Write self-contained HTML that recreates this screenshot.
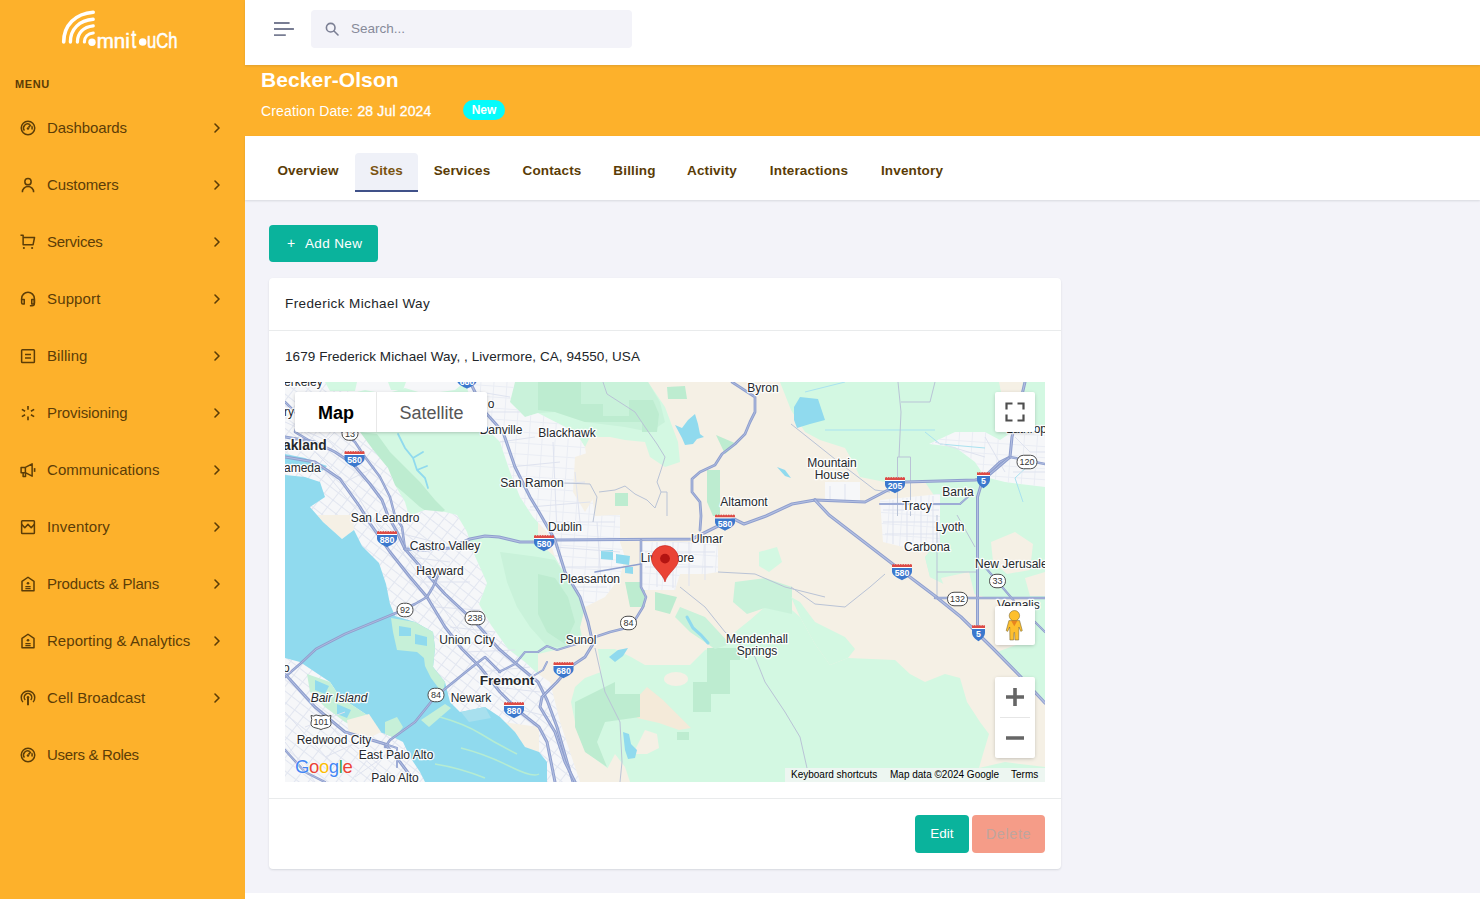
<!DOCTYPE html>
<html lang="en">
<head>
<meta charset="utf-8">
<title>Becker-Olson - Sites</title>
<style>
*{box-sizing:border-box;margin:0;padding:0}
html,body{width:1480px;height:899px;overflow:hidden}
body{background:#f3f3f9;font-family:"Liberation Sans",sans-serif;color:#212529;position:relative}
.abs{position:absolute}
/* sidebar */
#sidebar{position:absolute;left:0;top:0;width:245px;height:899px;background:#fdb12b}
#sidebar .menu-title{position:absolute;left:15px;top:78px;font-size:11px;font-weight:700;letter-spacing:.6px;color:#5a3c06}
.nav-item{position:absolute;left:0;width:245px;height:24px;color:#5c3d07;font-size:15px;line-height:24px}
.nav-item .lbl{position:absolute;left:47px;top:0;white-space:nowrap}
.nav-item svg.ic{position:absolute;left:19px;top:3px;width:18px;height:18px}
.nav-item svg.chev{position:absolute;left:212px;top:6px;width:10px;height:12px}
/* topbar */
#topbar{position:absolute;left:245px;top:0;width:1235px;height:65px;background:#fff;z-index:3;box-shadow:0 1px 2px rgba(56,65,74,.15)}
#search{position:absolute;left:66px;top:10px;width:321px;height:38px;background:#f3f3f9;border-radius:4px}
#search span{position:absolute;left:40px;top:10px;font-size:13.5px;color:#878a99;line-height:17px}
/* page header */
#band{position:absolute;left:245px;top:65px;width:1235px;height:71px;background:#fdb12b}
#band h1{position:absolute;left:16px;top:3px;font-size:21px;letter-spacing:.1px;font-weight:700;color:#fff;line-height:24px;white-space:nowrap}
#band .sub{position:absolute;left:16px;top:38px;font-size:14px;letter-spacing:.15px;color:#fff;line-height:17px;white-space:nowrap}
#band .badge{position:absolute;left:218px;top:35px;width:42px;height:20px;border-radius:10px;background:#05fbfb;color:#fff;font-size:12px;font-weight:700;text-align:center;line-height:21px}
/* tabs */
#tabs{position:absolute;left:245px;top:136px;width:1235px;height:64px;background:#fff;box-shadow:0 1px 2px rgba(56,65,74,.15)}
#tabs .tab{position:absolute;top:17px;height:39px;line-height:35px;letter-spacing:.15px;font-size:13.5px;font-weight:700;color:#5a3c06;white-space:nowrap;text-align:center}
#tabs .tab.active{background:#eff1f8;border-bottom:2px solid #405189;border-radius:4px 4px 0 0;color:#7a5410}
/* content */
#addnew{position:absolute;left:269px;top:225px;width:109px;height:37px;background:#0ab39c;border-radius:4px;color:#fff;font-size:13.5px;line-height:37px}
#addnew .plus{position:absolute;left:18px;top:0;font-size:14px}
#addnew .t{position:absolute;left:36px;top:0;white-space:nowrap;letter-spacing:.35px}
#card{position:absolute;left:269px;top:278px;width:792px;height:591px;background:#fff;border-radius:4px;box-shadow:0 1px 2px rgba(56,65,74,.15)}
#card .hd{position:absolute;left:0;top:0;width:792px;height:53px;border-bottom:1px solid #e9ebec}
#card .hd span{position:absolute;left:16px;top:17px;letter-spacing:.4px;font-size:13.5px;line-height:17px;color:#212529;white-space:nowrap}
#card .addr{position:absolute;left:16px;top:70px;letter-spacing:.07px;font-size:13.5px;line-height:17px;color:#212529;white-space:nowrap}
#card .ft{position:absolute;left:0;top:520px;width:792px;height:70px;border-top:1px solid #e9ebec}
.btn{position:absolute;top:16px;height:38px;border-radius:4px;color:#fff;font-size:13.5px;line-height:38px;text-align:center}
#edit{left:646px;width:54px;background:#0ab39c}
#delete{left:703px;width:73px;background:#f59c88;color:#bfa59e;font-size:14.500px;letter-spacing:.6px}
#map{position:absolute;left:16px;top:104px;width:760px;height:400px;overflow:hidden;background:#f5f0e4}

.gm-type{position:absolute;left:10px;top:10px;width:192px;height:40px;background:#fff;border-radius:2px;box-shadow:0 1px 4px -1px rgba(0,0,0,.3);font-size:18px;line-height:42px}
.gm-type .gm-m{position:absolute;left:1px;top:0;width:81px;text-align:center;font-weight:700;color:#000;border-right:1px solid #e8e8e8;height:40px}
.gm-type .gm-s{position:absolute;left:81px;top:0;width:111px;text-align:center;color:#565656}
.gm-box{position:absolute;width:40px;background:#fff;border-radius:2px;box-shadow:0 1px 4px -1px rgba(0,0,0,.3)}
.gm-box svg{display:block}
.gm-attr{position:absolute;left:500px;top:386px;width:260px;height:14px;background:rgba(245,245,245,.75);font-size:10px;line-height:14px;color:#000}
.gm-attr span{position:absolute;top:0;white-space:nowrap}
.gm-logo{position:absolute;left:10px;top:374px;font-size:18.500px;line-height:22px;letter-spacing:-.4px;white-space:nowrap;text-shadow:0 0 1px #fff,0 0 2px #fff}
#footer{position:absolute;left:245px;top:893px;width:1235px;height:6px;background:#fff}
</style>
</head>
<body>
<div id="sidebar">
  <svg id="logo" class="abs" style="left:50px;top:0;width:150px;height:60px" viewBox="0 0 150 60">
    <g fill="none" stroke="#fff" stroke-linecap="round">
      <path d="M13.700 42C13.700 25 25.500 13.500 43.200 12.200" stroke-width="3.600"/>
      <path d="M20.400 42C20.400 29 29.500 20.300 43.200 19.300" stroke-width="3.400"/>
      <path d="M27.400 42C27.400 33 33.500 26.800 43.200 25.800" stroke-width="3.300"/>
      <path d="M34.400 42C34.400 37 38 33.500 43.200 33" stroke-width="3.200"/>
    </g>
    <circle cx="42" cy="42.300" r="3.700" fill="#fff"/>
    <circle cx="92.700" cy="42" r="3.800" fill="#fff"/>
    <g font-family="'Liberation Sans',sans-serif" fill="#fff" stroke="#fff" stroke-width=".55" stroke-linejoin="round">
      <text x="46.700" y="47.600" font-size="21" textLength="33" lengthAdjust="spacingAndGlyphs">mni</text>
      <text x="81.200" y="47.900" font-size="25" textLength="5" lengthAdjust="spacingAndGlyphs">t</text>
      <text x="97" y="47.600" font-size="21.500" textLength="30.500" lengthAdjust="spacingAndGlyphs">uCh</text>
    </g>
  </svg>
  <div class="menu-title">MENU</div>
  <div class="nav-item" style="top:116px"><svg class="ic" viewBox="0 0 24 24" fill="none" stroke="currentColor" stroke-width="2" stroke-linejoin="round"><circle cx="12" cy="12" r="9"/><path d="M7.200 15.500a5.500 5.500 0 0 1 7.300-8M17 9.600a5.500 5.500 0 0 1 .2 4.400"/><path d="M12.8 11.2l3-3.6" stroke-width="2.2"/><circle cx="12" cy="12.6" r="1.7" fill="currentColor" stroke="none"/></svg><span class="lbl" id="n0" style="letter-spacing:-0.09px">Dashboards</span><svg class="chev" viewBox="0 0 10 12"><path d="M3 2l4 4-4 4" fill="none" stroke="currentColor" stroke-width="1.600" stroke-linecap="round" stroke-linejoin="round"/></svg></div>
  <div class="nav-item" style="top:173px"><svg class="ic" viewBox="0 0 24 24" fill="none" stroke="currentColor" stroke-width="2" stroke-linejoin="round"><circle cx="12" cy="7.5" r="4.2"/><path d="M4.5 21.5a7.5 7.5 0 0 1 15 0"/></svg><span class="lbl" id="n1" style="letter-spacing:-0.11px">Customers</span><svg class="chev" viewBox="0 0 10 12"><path d="M3 2l4 4-4 4" fill="none" stroke="currentColor" stroke-width="1.600" stroke-linecap="round" stroke-linejoin="round"/></svg></div>
  <div class="nav-item" style="top:230px"><svg class="ic" viewBox="0 0 24 24" fill="none" stroke="currentColor" stroke-width="2" stroke-linejoin="round"><path d="M2 3h3.500v12.500h13.300l1.900-9.500H5.500"/><circle cx="6.5" cy="20" r="1.4" fill="currentColor" stroke="none"/><circle cx="17.5" cy="20" r="1.4" fill="currentColor" stroke="none"/></svg><span class="lbl" id="n2" style="letter-spacing:-0.25px">Services</span><svg class="chev" viewBox="0 0 10 12"><path d="M3 2l4 4-4 4" fill="none" stroke="currentColor" stroke-width="1.600" stroke-linecap="round" stroke-linejoin="round"/></svg></div>
  <div class="nav-item" style="top:287px"><svg class="ic" viewBox="0 0 24 24" fill="none" stroke="currentColor" stroke-width="2" stroke-linejoin="round"><path d="M3.5 13v-1.5a8.5 8.5 0 0 1 17 0V18a3 3 0 0 1-3 3h-3"/><path d="M3.5 12.5h3.5v6H5a1.5 1.5 0 0 1-1.5-1.5zM20.5 12.5H17v6h2a1.5 1.5 0 0 0 1.500-1.5z"/></svg><span class="lbl" id="n3" style="letter-spacing:0.14px">Support</span><svg class="chev" viewBox="0 0 10 12"><path d="M3 2l4 4-4 4" fill="none" stroke="currentColor" stroke-width="1.600" stroke-linecap="round" stroke-linejoin="round"/></svg></div>
  <div class="nav-item" style="top:344px"><svg class="ic" viewBox="0 0 24 24" fill="none" stroke="currentColor" stroke-width="2" stroke-linejoin="round"><rect x="3.5" y="3.500" width="17" height="17" rx="1"/><path d="M8 10h8M8 14.500h8"/></svg><span class="lbl" id="n4" style="letter-spacing:0.07px">Billing</span><svg class="chev" viewBox="0 0 10 12"><path d="M3 2l4 4-4 4" fill="none" stroke="currentColor" stroke-width="1.600" stroke-linecap="round" stroke-linejoin="round"/></svg></div>
  <div class="nav-item" style="top:401px"><svg class="ic" viewBox="0 0 24 24" fill="none" stroke="currentColor" stroke-width="2" stroke-linejoin="round"><path d="M12 2.500v5M12 16.5v5M3.800 7.200l4.300 2.500M15.900 14.300l4.300 2.500M3.800 16.800l4.300-2.500M15.900 9.700l4.300-2.500" stroke-width="2.200"/></svg><span class="lbl" id="n5" style="letter-spacing:-0.1px">Provisioning</span><svg class="chev" viewBox="0 0 10 12"><path d="M3 2l4 4-4 4" fill="none" stroke="currentColor" stroke-width="1.600" stroke-linecap="round" stroke-linejoin="round"/></svg></div>
  <div class="nav-item" style="top:458px"><svg class="ic" viewBox="0 0 24 24" fill="none" stroke="currentColor" stroke-width="2" stroke-linejoin="round"><path d="M2.800 8.500h5.700l9-4.700v16.400l-9-4.700H2.800zM8.500 8.500v7M5.500 15.500v5.200h3.200v-5.200"/><path d="M20.800 9.500v5" stroke-width="2.200"/></svg><span class="lbl" id="n6" style="letter-spacing:0.06px">Communications</span><svg class="chev" viewBox="0 0 10 12"><path d="M3 2l4 4-4 4" fill="none" stroke="currentColor" stroke-width="1.600" stroke-linecap="round" stroke-linejoin="round"/></svg></div>
  <div class="nav-item" style="top:515px"><svg class="ic" viewBox="0 0 24 24" fill="none" stroke="currentColor" stroke-width="2" stroke-linejoin="round"><rect x="3.500" y="3.500" width="17" height="17" rx="1"/><path d="M3.500 8.500l4.250 4.500 4.250-4.500 4.250 4.500 4.250-4.500"/></svg><span class="lbl" id="n7" style="letter-spacing:0.14px">Inventory</span><svg class="chev" viewBox="0 0 10 12"><path d="M3 2l4 4-4 4" fill="none" stroke="currentColor" stroke-width="1.600" stroke-linecap="round" stroke-linejoin="round"/></svg></div>
  <div class="nav-item" style="top:572px"><svg class="ic" viewBox="0 0 24 24" fill="none" stroke="currentColor" stroke-width="2" stroke-linejoin="round"><path d="M4 21V8.500l8-5.500 8 5.500V21z"/><circle cx="12" cy="11" r="1.800" fill="currentColor" stroke="none"/><path d="M8.500 15.500h7M8.500 18.300h7" stroke-width="1.700"/></svg><span class="lbl" id="n8" style="letter-spacing:-0.19px">Products &amp; Plans</span><svg class="chev" viewBox="0 0 10 12"><path d="M3 2l4 4-4 4" fill="none" stroke="currentColor" stroke-width="1.600" stroke-linecap="round" stroke-linejoin="round"/></svg></div>
  <div class="nav-item" style="top:629px"><svg class="ic" viewBox="0 0 24 24" fill="none" stroke="currentColor" stroke-width="2" stroke-linejoin="round"><path d="M4 21V8.500l8-5.500 8 5.500V21z"/><circle cx="12" cy="11" r="1.800" fill="currentColor" stroke="none"/><path d="M8.500 15.500h7M8.500 18.300h7" stroke-width="1.700"/></svg><span class="lbl" id="n9" style="letter-spacing:0.04px">Reporting &amp; Analytics</span><svg class="chev" viewBox="0 0 10 12"><path d="M3 2l4 4-4 4" fill="none" stroke="currentColor" stroke-width="1.600" stroke-linecap="round" stroke-linejoin="round"/></svg></div>
  <div class="nav-item" style="top:686px"><svg class="ic" viewBox="0 0 24 24" fill="none" stroke="currentColor" stroke-width="2" stroke-linejoin="round"><path d="M5.200 17.500a9 9 0 1 1 13.600 0"/><path d="M8.400 14.500a5 5 0 1 1 7.200 0"/><path d="M12 11v10.500" stroke-width="2.600"/><circle cx="12" cy="11" r="1.600" fill="currentColor" stroke="none"/></svg><span class="lbl" id="n10" style="letter-spacing:0.05px">Cell Broadcast</span><svg class="chev" viewBox="0 0 10 12"><path d="M3 2l4 4-4 4" fill="none" stroke="currentColor" stroke-width="1.600" stroke-linecap="round" stroke-linejoin="round"/></svg></div>
  <div class="nav-item" style="top:743px"><svg class="ic" viewBox="0 0 24 24" fill="none" stroke="currentColor" stroke-width="2" stroke-linejoin="round"><circle cx="12" cy="12" r="9"/><path d="M7.200 15.500a5.500 5.500 0 0 1 7.300-8M17 9.600a5.500 5.500 0 0 1 .2 4.400"/><path d="M12.8 11.2l3-3.6" stroke-width="2.2"/><circle cx="12" cy="12.6" r="1.7" fill="currentColor" stroke="none"/></svg><span class="lbl" id="n11" style="letter-spacing:-0.32px">Users &amp; Roles</span></div>
</div>
<div id="topbar">
  <svg class="abs" style="left:28px;top:20px;width:22px;height:18px" viewBox="0 0 22 18" fill="none" stroke="#787d93" stroke-width="1.800" stroke-linecap="butt"><path d="M1 3h15.600M1 9h19.900M1 15.200h11.800"/></svg>
  <div id="search"><svg class="abs" style="left:13px;top:11px;width:16px;height:16px" viewBox="0 0 16 16" fill="none" stroke="#7b7f94" stroke-width="1.600" stroke-linecap="round"><circle cx="6.700" cy="6.700" r="4.300"/><path d="M10 10l4 4"/></svg><span>Search...</span></div>
</div>
<div id="band">
  <h1>Becker-Olson</h1>
  <div class="sub">Creation Date: <b style="font-weight:400;-webkit-text-stroke:.3px #fff">28 Jul 2024</b></div>
  <div class="badge">New</div>
</div>
<div id="tabs">
  <div class="tab" style="left:16px;width:94px">Overview</div>
  <div class="tab active" style="left:110px;width:63px">Sites</div>
  <div class="tab" style="left:173px;width:88px">Services</div>
  <div class="tab" style="left:261px;width:92px">Contacts</div>
  <div class="tab" style="left:353px;width:73px">Billing</div>
  <div class="tab" style="left:426px;width:82px">Activity</div>
  <div class="tab" style="left:508px;width:112px">Interactions</div>
  <div class="tab" style="left:620px;width:94px">Inventory</div>
</div>
<div id="addnew"><span class="plus">+</span><span class="t">Add New</span></div>
<div id="card">
  <div class="hd"><span>Frederick Michael Way</span></div>
  <div class="addr">1679 Frederick Michael Way, , Livermore, CA, 94550, USA</div>
  <div id="map">
<!--MAP-->
<svg class="abs" style="left:0;top:0" width="760" height="400" viewBox="0 0 760 400">
<rect width="760" height="400" fill="#d3f8e2"/>
<path d="M363 0 L495 0 L506 28 L520 50 L535 58 L560 66 L568 80 L575 95 L600 100 L640 100 L648 112 L655 125 L650 135 L652 160 L640 175 L645 195 L665 205 L700 215 L760 215 L760 385 L720 380 L694 386 L698 372 L704 352 L695 340 L682 320 L675 296 L660 292 L640 300 L625 292 L610 278 L563 276 L545 283 L530 262 L515 235 L500 222 L480 225 L465 238 L450 250 L438 262 L420 268 L405 283 L360 283 L346 275 L330 267 L300 267 L295 245 L300 225 L285 200 L270 175 L253 160 L253 60 L290 50 L300 65 L305 55 L325 55 L340 58 L360 60 L365 75 L380 85 L395 80 L393 60 L380 25Z" fill="#f5f0e5" />
<path d="M253 272 L270 268 L290 263 L312 260 L316 290 L300 296 L290 305 L286 320 L291 345 L301 370 L321 385 L340 400 L290 400 L280 370 L270 340 L262 300 L253 292Z" fill="#f5f0e5" />
<path d="M346 322 L362 305 L378 318 L392 332 L406 346 L394 348 L374 341 L352 336Z" fill="#f4ead9" />
<ellipse cx="391" cy="297" rx="12" ry="7" fill="#f5f0e5"/>
<path d="M348 372 L360 348 L372 352 L374 366 L362 372Z" fill="#f5f0e5" />
<path d="M318 395 L330 372 L340 385 L345 400 L320 400Z" fill="#f5f0e5" />
<path d="M652 133 L760 133 L760 215 L700 215 L665 205 L645 195 L640 175 L652 160Z" fill="#d3f8e2" />
<path d="M706 160 L730 150 L748 162 L745 188 L722 192 L708 180Z" fill="#f5f0e5" />
<path d="M656 196 L684 190 L690 214 L662 212Z" fill="#f5f0e5" />
<path d="M740 196 L760 190 L760 214 L745 214Z" fill="#f5f0e5" />
<path d="M745 215 L760 215 L760 321 L735 294 L712 270 L745 258Z" fill="#d3f8e2" />
<path d="M714 0 L738 0 L733 30 L720 30Z" fill="#f5f0e5" />
<path d="M450 200 L480 196 L507 205 L507 232 L480 226 L462 232 L448 220Z" fill="#c9f2da" />
<path d="M474 170 L492 165 L497 180 L484 190 L474 184Z" fill="#d3f8e2" />
<path d="M506 215 L515 220 L530 240 L560 255 L570 267 L563 276 L545 283 L530 262 L515 235Z" fill="#d3f8e2" />
<path d="M74 50 L92 52 L105 70 L120 85 L135 100 L150 118 L160 128 L150 135 L135 125 L118 110 L100 95 L88 75Z" fill="#bdecd0" />
<path d="M215 0 L363 0 L375 20 L380 40 L365 50 L340 45 L300 40 L270 30 L253 31 L240 35 L225 20Z" fill="#c9f2da" />
<path d="M253 0 L296 0 L296 22 L318 22 L318 34 L344 34 L344 18 L368 18 L374 32 L372 50 L357 50 L357 40 L300 40 L270 30 L253 28Z" fill="#bdecd0" />
<path d="M215 170 L253 175 L270 178 L285 200 L300 225 L295 245 L296 260 L280 266 L262 264 L245 245 L232 225 L222 200Z" fill="#c9f2da" />
<path d="M253 192 L270 196 L283 215 L290 240 L280 262 L262 250 L253 232Z" fill="#bdecd0" />
<path d="M290 320 L330 300 L330 312 L355 312 L355 335 L320 340 L312 360 L322 385 L300 370 L290 345Z" fill="#bdecd0" />
<path d="M422 266 L455 266 L455 278 L445 278 L445 312 L426 312 L426 330 L408 330 L408 300 L422 300Z" fill="#bdecd0" />
<path d="M422 88 L435 88 L435 134 L428 134 L422 120Z" fill="#bdecd0" />
<path d="M431 53 L452 62 L440 72Z" fill="#bdecd0" />
<path d="M382 5 L400 4 L402 17 L383 17Z" fill="#bdecd0" />
<path d="M330 111 L343 111 L343 124 L330 124Z" fill="#bdecd0" />
<path d="M340 200 L360 200 L360 225 L345 225Z" fill="#bdecd0" />
<path d="M370 210 L392 215 L385 232 L370 228Z" fill="#bdecd0" />
<path d="M395 225 L420 235 L445 262 L430 267 L405 250 L390 235Z" fill="#c9f2da" />
<path d="M392 350 L404 350 L404 358 L392 358Z" fill="#bdecd0" />
<path d="M0 0 L60 0 L75 50 L89 69 L103 86 L110 103 L120 120 L124 134 L140 128 L160 130 L172 133 L182 150 L189 172 L202 201 L194 222 L206 243 L223 267 L240 280 L253 292 L265 300 L275 340 L285 370 L295 400 L0 400Z" fill="#f6f7f9" />
<path d="M60 0 L180 0 L170 8 L140 12 L120 6 L100 12 L80 8 L64 12Z" fill="#f6f7f9" />
<path d="M180 0 L230 0 L225 20 L240 35 L253 31 L290 50 L300 65 L305 100 L310 134 L335 133 L335 160 L340 175 L335 195 L320 215 L300 225 L285 200 L270 175 L262 150 L248 135 L235 115 L225 90 L215 60 L195 40 L185 15Z" fill="#f6f7f9" />
<path d="M357 160 L433 160 L433 190 L421 192 L395 192 L390 208 L357 208Z" fill="#f6f7f9" />
<path d="M595 118 L655 112 L655 165 L630 168 L598 160Z" fill="#f6f7f9" />
<path d="M540 100 L575 100 L575 120 L540 118Z" fill="#f6f7f9" />
<path d="M644 62 L670 50 L700 50 L715 58 L730 48 L760 45 L760 105 L720 100 L700 95 L690 80 L670 65Z" fill="#f6f7f9" />
<defs><pattern id="st1" width="11" height="9" patternUnits="userSpaceOnUse" patternTransform="rotate(38)"><path d="M0 .5H11M.5 0V9" stroke="#e2e6f0" stroke-width="1" fill="none"/></pattern><pattern id="st2" width="13" height="11" patternUnits="userSpaceOnUse" patternTransform="rotate(4)"><path d="M0 .5H13M.5 0V11" stroke="#eaedf4" stroke-width="1" fill="none"/></pattern><clipPath id="cu3"><path d="M0 0 L60 0 L75 50 L89 69 L103 86 L110 103 L120 120 L124 134 L140 128 L160 130 L172 133 L182 150 L189 172 L202 201 L194 222 L206 243 L223 267 L240 280 L253 292 L265 300 L275 340 L285 370 L295 400 L0 400Z"/></clipPath><clipPath id="cu1"><path d="M180 0 L230 0 L225 20 L240 35 L253 31 L290 50 L300 65 L305 100 L310 134 L335 133 L335 160 L340 175 L335 195 L320 215 L300 225 L285 200 L270 175 L262 150 L248 135 L235 115 L225 90 L215 60 L195 40 L185 15Z M357 160 L433 160 L433 190 L421 192 L395 192 L390 208 L357 208Z M595 118 L655 112 L655 165 L630 168 L598 160Z M644 62 L670 50 L700 50 L715 58 L730 48 L760 45 L760 105 L720 100 L700 95 L690 80 L670 65Z"/></clipPath></defs>
<rect width="300" height="400" fill="url(#st1)" clip-path="url(#cu3)"/>
<rect x="170" width="590" height="400" fill="url(#st2)" clip-path="url(#cu1)"/>
<path d="M40 0 L72 0 L70 9 L45 9Z" fill="#d3f8e2" />
<path d="M103 0 L121 0 L118 8 L106 8Z" fill="#d3f8e2" />
<path d="M32 133 L68 133 L69 148 L57 157 L38 140Z" fill="#f5f0e5" />
<path d="M218 340 L254 345 L254 372 L240 365 L230 350Z" fill="#f5f0e5" />
<path d="M290 75 L305 70 L312 110 L300 130 L288 110Z" fill="#f5f0e5" />
<path d="M0 93 L20 95 L35 100 L40 115 L25 125 L32 133 L38 140 L57 157 L69 148 L77 164 L94 181 L101 202 L105 222 L110 234 L130 240 L148 250 L150 266 L148 285 L160 300 L165 320 L175 330 L200 325 L215 335 L230 350 L240 365 L254 370 L262 380 L262 400 L140 400 L135 390 L125 375 L118 360 L108 355 L95 350 L85 335 L70 325 L55 315 L45 300 L30 290 L15 280 L0 276Z" fill="#90daee" />
<path d="M0 72 L20 76 L42 84 L36 90 L18 84 L0 82Z" fill="#90daee"/>
<path d="M106 236 L130 240 L148 250 L150 266 L146 282 L132 270 L112 268 L108 250Z" fill="#c6f0d8" />
<path d="M114 244 L126 246 L126 254 L114 254Z" fill="#90daee" />
<path d="M130 252 L142 255 L142 264 L130 262Z" fill="#90daee" />
<path d="M22 292 L45 300 L55 315 L70 325 L85 335 L95 350 L80 350 L60 340 L40 325 L25 310Z" fill="#c6f0d8" />
<path d="M30 298 L44 304 L40 312 L30 308Z" fill="#90daee" />
<path d="M52 322 L66 328 L62 336 L52 332Z" fill="#90daee" />
<path d="M62 338 L84 332 L96 350 L84 356 L64 352Z" fill="#f5f0e5" />
<path d="M100 340 L112 335 L118 345 L110 356 L100 352Z" fill="#c6f0d8" />
<path d="M138 268 L150 266 L148 285 L160 300 L158 312 L146 296 L140 284Z" fill="#c6f0d8" />
<path d="M136 338 L160 322 L166 326 L144 345Z" fill="#c6f0d8" />
<path d="M155 335 Q180 342 196 352 T232 372 M176 366 Q200 372 224 384 T254 392 M150 382 Q175 386 200 396" fill="none" stroke="#b5ecd2" stroke-width="1.500"/>
<path d="M176 330 L200 325 L206 336 L184 340Z" fill="#a8e0ee" />
<path d="M390 43 L397 46 L403 38 L410 32 L413 42 L415 52 L419 55 L412 57 L408 62 L400 63 L397 56Z" fill="#90daee" />
<path d="M509 25 L515 15 L533 17 L540 38 L525 42 L512 46 L509 38Z" fill="#90daee" />
<path d="M338 350 L344 352 L346 362 L352 368 L350 376 L343 377 L340 368Z" fill="#90daee" />
<path d="M324 275 L333 268 L343 266 L338 274 L330 280Z" fill="#90daee" />
<path d="M402 235 L408 246 L416 253 L423 261" fill="none" stroke="#90daee" stroke-width="3" stroke-linecap="round"/>
<path d="M316 168 L328 168 L328 178 L316 177Z" fill="#90daee" />
<path d="M331 172 L345 174 L344 183 L331 181Z" fill="#90daee" />
<path d="M340 185 L348 185 L348 192 L340 191Z" fill="#90daee" />
<path d="M113 52 L120 66 L128 76 L132 88 L140 96 L143 106 M128 76 L138 70 M132 88 L142 84" fill="none" stroke="#90daee" stroke-width="1.800" stroke-linecap="round"/>
<path d="M492 85 L500 88 L506 96 L500 94Z" fill="#90daee" />
<path d="M540 48 H650 M520 10 L560 0 M640 50 L655 62 L700 66 M745 82 L730 96 L738 120" fill="none" stroke="#a9e2f0" stroke-width="1"/>
<g fill="none" stroke="#dfe3ef" stroke-width="1">
<path d="M10 20 L60 45 M0 40 L45 60 L80 100 M20 60 L70 110 L95 150 M40 90 L90 150 L130 205 M70 120 L110 160 L150 215 L175 250 M95 135 L135 180 L170 225 L200 260 M110 150 L150 160 M125 175 L165 180 M135 200 L185 200 M150 225 L195 228 M165 245 L210 250 M180 270 L230 268 M195 290 L245 285 M210 305 L255 310 M225 325 L265 335 M120 190 L160 240 M100 160 L120 140 M60 100 L90 85 M30 70 L50 50"/>
<path d="M195 10 L225 15 M200 30 L235 30 M215 60 L250 55 M225 85 L275 80 M235 105 L300 100 M245 125 L305 120 M258 140 L330 140 M270 165 L335 170 M280 185 L335 185 M290 205 L322 205 M268 60 L272 150 M290 90 L296 150 M312 140 L316 200"/>
<path d="M360 170 H430 M360 185 H428 M372 160 V205 M388 160 V206 M404 160 V204 M420 160 V198"/>
<path d="M598 128 H654 M598 140 H654 M600 152 H652 M608 118 V162 M622 116 V166 M636 114 V166 M648 114 V164 M545 104 V118 M560 102 V118"/>
<path d="M5 300 L60 360 L100 395 M0 330 L50 385 M20 345 L60 330 M40 375 L85 355 M70 395 L105 370 M0 360 L30 400"/>
<path d="M650 60 L700 75 M700 55 L720 90 M730 55 L745 70 H760 M728 90 H760"/>
</g>
<g fill="none" stroke="#b9c3d6" stroke-width="1">
<path d="M318 0 L322 12 L350 30 L360 45 L372 62 L380 75 L376 88 L372 100 L376 110 H382 V134"/>
<path d="M314 110 L330 108 L340 104 L350 112 L362 118 L370 126 L376 110"/>
<path d="M253 100 L305 102 L312 115 L308 140"/>
<path d="M310 266 L320 310 L335 340 L337 380 L335 400"/>
<path d="M506 42 L560 85 L590 108 L605 110"/>
<path d="M613 0 L616 30 L614 75 H625.500 V134 M616 20 H645 L650 0 M614 75 H612.500 V134"/>
<path d="M395 205 L420 225 L440 250 L470 275 L480 300 L500 330 L515 355 L522 386"/>
<path d="M506 205 L530 222 L560 225 L585 205 L600 192"/>
<path d="M433 190 L470 192 L500 205 L540 215"/>
<path d="M652 133 V215 M652 190 H692 M672 133 L690 165"/>
</g>
<path d="M55 48 L70 60 L80 75 L95 95 L105 115 L110 134 L117 145 L120 167" fill="none" stroke="#8f9fce" stroke-width="2.5" stroke-linejoin="round" stroke-linecap="round" /><path d="M55 48 L70 60 L80 75 L95 95 L105 115 L110 134 L117 145 L120 167" fill="none" stroke="#b4c0e2" stroke-width="0.8" stroke-linejoin="round" stroke-linecap="round"/>
<path d="M0 20 L15 35 L10 50 L30 62" fill="none" stroke="#8f9fce" stroke-width="2.5" stroke-linejoin="round" stroke-linecap="round" /><path d="M0 20 L15 35 L10 50 L30 62" fill="none" stroke="#b4c0e2" stroke-width="0.8" stroke-linejoin="round" stroke-linecap="round"/>
<path d="M0 55 L30 60 L50 70 L68 82 L85 102 L97 118 L103 134 L112 150 L120 167" fill="none" stroke="#8f9fce" stroke-width="3" stroke-linejoin="round" stroke-linecap="round" /><path d="M0 55 L30 60 L50 70 L68 82 L85 102 L97 118 L103 134 L112 150 L120 167" fill="none" stroke="#b4c0e2" stroke-width="1" stroke-linejoin="round" stroke-linecap="round"/>
<path d="M0 75 L30 80 L55 97 L75 125 L84 140 L105 170 L125 195 L142 215 L160 245 L177 267 L195 285 L215 310 L235 330 L254 345 L262 360 L270 400" fill="none" stroke="#8f9fce" stroke-width="3" stroke-linejoin="round" stroke-linecap="round" /><path d="M0 75 L30 80 L55 97 L75 125 L84 140 L105 170 L125 195 L142 215 L160 245 L177 267 L195 285 L215 310 L235 330 L254 345 L262 360 L270 400" fill="none" stroke="#b4c0e2" stroke-width="1" stroke-linejoin="round" stroke-linecap="round"/>
<path d="M120 167 L140 190 L160 212 L190 240 L214 267 L235 285 L253 300 L262 318 L272 345 L282 380 L288 400" fill="none" stroke="#8f9fce" stroke-width="3" stroke-linejoin="round" stroke-linecap="round" /><path d="M120 167 L140 190 L160 212 L190 240 L214 267 L235 285 L253 300 L262 318 L272 345 L282 380 L288 400" fill="none" stroke="#b4c0e2" stroke-width="1" stroke-linejoin="round" stroke-linecap="round"/>
<path d="M120 167 L140 168 L165 166 L185 157 L200 154 L214 155 L235 160 L254 160 L270 158 L407 157 L431 145 L449 137 L459 142 L470 138 L481 134 L507 122 L530 118" fill="none" stroke="#8f9fce" stroke-width="3.2" stroke-linejoin="round" stroke-linecap="round" /><path d="M120 167 L140 168 L165 166 L185 157 L200 154 L214 155 L235 160 L254 160 L270 158 L407 157 L431 145 L449 137 L459 142 L470 138 L481 134 L507 122 L530 118" fill="none" stroke="#b4c0e2" stroke-width="1.2000000000000002" stroke-linejoin="round" stroke-linecap="round"/>
<path d="M530 118 L580 120 L603 108 L620 100 L690 98 L697 97 L715 80 L725 75" fill="none" stroke="#8f9fce" stroke-width="3" stroke-linejoin="round" stroke-linecap="round" /><path d="M530 118 L580 120 L603 108 L620 100 L690 98 L697 97 L715 80 L725 75" fill="none" stroke="#b4c0e2" stroke-width="1" stroke-linejoin="round" stroke-linecap="round"/>
<path d="M530 118 L544 133 L609 183 L650 214 L676 235 L709 267.5 L735 294 L760 321" fill="none" stroke="#8f9fce" stroke-width="3.2" stroke-linejoin="round" stroke-linecap="round" /><path d="M530 118 L544 133 L609 183 L650 214 L676 235 L709 267.5 L735 294 L760 321" fill="none" stroke="#b4c0e2" stroke-width="1.2000000000000002" stroke-linejoin="round" stroke-linecap="round"/>
<path d="M740 0 L733 30 L727 55 L725 75 L705 92 L697 100 L692.5 115 L692.5 250" fill="none" stroke="#8f9fce" stroke-width="3" stroke-linejoin="round" stroke-linecap="round" /><path d="M740 0 L733 30 L727 55 L725 75 L705 92 L697 100 L692.5 115 L692.5 250" fill="none" stroke="#b4c0e2" stroke-width="1" stroke-linejoin="round" stroke-linecap="round"/>
<path d="M725 75 L760 82" fill="none" stroke="#8f9fce" stroke-width="2.5" stroke-linejoin="round" stroke-linecap="round" /><path d="M725 75 L760 82" fill="none" stroke="#b4c0e2" stroke-width="0.8" stroke-linejoin="round" stroke-linecap="round"/>
<path d="M650 216 L760 216" fill="none" stroke="#8f9fce" stroke-width="2.5" stroke-linejoin="round" stroke-linecap="round" /><path d="M650 216 L760 216" fill="none" stroke="#b4c0e2" stroke-width="0.8" stroke-linejoin="round" stroke-linecap="round"/>
<path d="M700 185 L730 220 L760 250" fill="none" stroke="#8f9fce" stroke-width="2.2" stroke-linejoin="round" stroke-linecap="round" /><path d="M700 185 L730 220 L760 250" fill="none" stroke="#b4c0e2" stroke-width="0.8" stroke-linejoin="round" stroke-linecap="round"/>
<path d="M595 122 L675 122 L685 113" fill="none" stroke="#8f9fce" stroke-width="2" stroke-linejoin="round" stroke-linecap="round" /><path d="M595 122 L675 122 L685 113" fill="none" stroke="#b4c0e2" stroke-width="0.8" stroke-linejoin="round" stroke-linecap="round"/>
<path d="M185 0 L200 30 L218 50 L230 85 L245 115 L254 130 L270 158 L280 190 L295 215 L303 240 L308 262 L300 275 L285 285 L272 300 L257 315 L255 325 L270 350 L280 380 L290 400" fill="none" stroke="#8f9fce" stroke-width="3" stroke-linejoin="round" stroke-linecap="round" /><path d="M185 0 L200 30 L218 50 L230 85 L245 115 L254 130 L270 158 L280 190 L295 215 L303 240 L308 262 L300 275 L285 285 L272 300 L257 315 L255 325 L270 350 L280 380 L290 400" fill="none" stroke="#b4c0e2" stroke-width="1" stroke-linejoin="round" stroke-linecap="round"/>
<path d="M356 158 L356 205 L361 215 L358 225 L350 238 L345 245 L325 250 L310 255 L305 258" fill="none" stroke="#8f9fce" stroke-width="2.6" stroke-linejoin="round" stroke-linecap="round" /><path d="M356 158 L356 205 L361 215 L358 225 L350 238 L345 245 L325 250 L310 255 L305 258" fill="none" stroke="#b4c0e2" stroke-width="0.8" stroke-linejoin="round" stroke-linecap="round"/>
<path d="M310 190 L356 182" fill="none" stroke="#8f9fce" stroke-width="1.5" stroke-linejoin="round" stroke-linecap="round" />
<path d="M100 365 L105 358 L130 340 L150 315 L187 285 L200 275 L215 290" fill="none" stroke="#8f9fce" stroke-width="2.6" stroke-linejoin="round" stroke-linecap="round" /><path d="M100 365 L105 358 L130 340 L150 315 L187 285 L200 275 L215 290" fill="none" stroke="#b4c0e2" stroke-width="0.8" stroke-linejoin="round" stroke-linecap="round"/>
<path d="M0 295 L15 282 L31 267 L60 252 L111 231 L130 222 L142 215 L148 205 L154 191" fill="none" stroke="#8f9fce" stroke-width="2.6" stroke-linejoin="round" stroke-linecap="round" /><path d="M0 295 L15 282 L31 267 L60 252 L111 231 L130 222 L142 215 L148 205 L154 191" fill="none" stroke="#b4c0e2" stroke-width="0.8" stroke-linejoin="round" stroke-linecap="round"/>
<path d="M0 292 L30 325 L60 350 L100 362 L115 380 L130 400" fill="none" stroke="#8f9fce" stroke-width="3" stroke-linejoin="round" stroke-linecap="round" /><path d="M0 292 L30 325 L60 350 L100 362 L115 380 L130 400" fill="none" stroke="#b4c0e2" stroke-width="1" stroke-linejoin="round" stroke-linecap="round"/>
<path d="M0 368 L20 390 L40 400" fill="none" stroke="#8f9fce" stroke-width="2.5" stroke-linejoin="round" stroke-linecap="round" /><path d="M0 368 L20 390 L40 400" fill="none" stroke="#b4c0e2" stroke-width="0.8" stroke-linejoin="round" stroke-linecap="round"/>
<path d="M100 362 L112 366 L112 385" fill="none" stroke="#8f9fce" stroke-width="2" stroke-linejoin="round" stroke-linecap="round" /><path d="M100 362 L112 366 L112 385" fill="none" stroke="#b4c0e2" stroke-width="0.8" stroke-linejoin="round" stroke-linecap="round"/>
<path d="M447 0 L470 15 L470 30 L465 40 L460 52 L450 62 L437 72 L430 83 L415 90 L407 97 L407 110 L415 120 L416 134 L415 148" fill="none" stroke="#8f9fce" stroke-width="2.8" stroke-linejoin="round" stroke-linecap="round" /><path d="M447 0 L470 15 L470 30 L465 40 L460 52 L450 62 L437 72 L430 83 L415 90 L407 97 L407 110 L415 120 L416 134 L415 148" fill="none" stroke="#b4c0e2" stroke-width="0.8" stroke-linejoin="round" stroke-linecap="round"/>
<path d="M214 290 L230 282 L240 270 L253 270 L262 264 L272 268 L285 264 L305 258" fill="none" stroke="#8f9fce" stroke-width="2.2" stroke-linejoin="round" stroke-linecap="round" /><path d="M214 290 L230 282 L240 270 L253 270 L262 264 L272 268 L285 264 L305 258" fill="none" stroke="#b4c0e2" stroke-width="0.8" stroke-linejoin="round" stroke-linecap="round"/>
<path d="M230 300 L245 296 L258 288 L262 280" fill="none" stroke="#8f9fce" stroke-width="2" stroke-linejoin="round" stroke-linecap="round" /><path d="M230 300 L245 296 L258 288 L262 280" fill="none" stroke="#b4c0e2" stroke-width="0.8" stroke-linejoin="round" stroke-linecap="round"/>
<g><path d="M59.5 72.0 V70.0 q1.25 -1.800 2.5 0 q1.25 -1.800 2.5 0 q1.25 -1.800 2.5 0 q1.25 -1.800 2.5 0 q1.25 -1.800 2.5 0 q1.25 -1.800 2.5 0 q1.25 -1.800 2.5 0 q1.25 -1.800 2.5 0 V72.0z" fill="#dd4b46"/><path d="M59.5 72.0 h20 v1 h-20z" fill="#fff"/><path d="M59.5 73.0 h20 v3.800 c0 4.500 -8.5 7.400 -10.0 8.400 c-1.500 -1 -10.0 -3.900 -10.0 -8.400z" fill="#3b78cd"/><text x="69.5" y="81.1" text-anchor="middle" font-family="'Liberation Sans',sans-serif" font-size="8.800" font-weight="700" fill="#fff">580</text></g>
<g><path d="M249.0 156.0 V154.0 q1.25 -1.800 2.5 0 q1.25 -1.800 2.5 0 q1.25 -1.800 2.5 0 q1.25 -1.800 2.5 0 q1.25 -1.800 2.5 0 q1.25 -1.800 2.5 0 q1.25 -1.800 2.5 0 q1.25 -1.800 2.5 0 V156.0z" fill="#dd4b46"/><path d="M249.0 156.0 h20 v1 h-20z" fill="#fff"/><path d="M249.0 157.0 h20 v3.800 c0 4.500 -8.5 7.400 -10.0 8.400 c-1.500 -1 -10.0 -3.900 -10.0 -8.400z" fill="#3b78cd"/><text x="259" y="165.1" text-anchor="middle" font-family="'Liberation Sans',sans-serif" font-size="8.800" font-weight="700" fill="#fff">580</text></g>
<g><path d="M430.0 135.5 V133.5 q1.25 -1.800 2.5 0 q1.25 -1.800 2.5 0 q1.25 -1.800 2.5 0 q1.25 -1.800 2.5 0 q1.25 -1.800 2.5 0 q1.25 -1.800 2.5 0 q1.25 -1.800 2.5 0 q1.25 -1.800 2.5 0 V135.5z" fill="#dd4b46"/><path d="M430.0 135.5 h20 v1 h-20z" fill="#fff"/><path d="M430.0 136.5 h20 v3.800 c0 4.500 -8.5 7.400 -10.0 8.400 c-1.500 -1 -10.0 -3.900 -10.0 -8.400z" fill="#3b78cd"/><text x="440" y="144.6" text-anchor="middle" font-family="'Liberation Sans',sans-serif" font-size="8.800" font-weight="700" fill="#fff">580</text></g>
<g><path d="M607.0 185.0 V183.0 q1.25 -1.800 2.5 0 q1.25 -1.800 2.5 0 q1.25 -1.800 2.5 0 q1.25 -1.800 2.5 0 q1.25 -1.800 2.5 0 q1.25 -1.800 2.5 0 q1.25 -1.800 2.5 0 q1.25 -1.800 2.5 0 V185.0z" fill="#dd4b46"/><path d="M607.0 185.0 h20 v1 h-20z" fill="#fff"/><path d="M607.0 186.0 h20 v3.800 c0 4.500 -8.5 7.400 -10.0 8.400 c-1.500 -1 -10.0 -3.900 -10.0 -8.400z" fill="#3b78cd"/><text x="617" y="194.1" text-anchor="middle" font-family="'Liberation Sans',sans-serif" font-size="8.800" font-weight="700" fill="#fff">580</text></g>
<g><path d="M92.0 152.0 V150.0 q1.25 -1.800 2.5 0 q1.25 -1.800 2.5 0 q1.25 -1.800 2.5 0 q1.25 -1.800 2.5 0 q1.25 -1.800 2.5 0 q1.25 -1.800 2.5 0 q1.25 -1.800 2.5 0 q1.25 -1.800 2.5 0 V152.0z" fill="#dd4b46"/><path d="M92.0 152.0 h20 v1 h-20z" fill="#fff"/><path d="M92.0 153.0 h20 v3.800 c0 4.500 -8.5 7.400 -10.0 8.400 c-1.500 -1 -10.0 -3.900 -10.0 -8.400z" fill="#3b78cd"/><text x="102" y="161.1" text-anchor="middle" font-family="'Liberation Sans',sans-serif" font-size="8.800" font-weight="700" fill="#fff">880</text></g>
<g><path d="M219.0 323.0 V321.0 q1.25 -1.800 2.5 0 q1.25 -1.800 2.5 0 q1.25 -1.800 2.5 0 q1.25 -1.800 2.5 0 q1.25 -1.800 2.5 0 q1.25 -1.800 2.5 0 q1.25 -1.800 2.5 0 q1.25 -1.800 2.5 0 V323.0z" fill="#dd4b46"/><path d="M219.0 323.0 h20 v1 h-20z" fill="#fff"/><path d="M219.0 324.0 h20 v3.800 c0 4.500 -8.5 7.400 -10.0 8.400 c-1.500 -1 -10.0 -3.900 -10.0 -8.400z" fill="#3b78cd"/><text x="229" y="332.1" text-anchor="middle" font-family="'Liberation Sans',sans-serif" font-size="8.800" font-weight="700" fill="#fff">880</text></g>
<g><path d="M172.0 -6.499999999999999 V-8.5 q1.25 -1.800 2.5 0 q1.25 -1.800 2.5 0 q1.25 -1.800 2.5 0 q1.25 -1.800 2.5 0 q1.25 -1.800 2.5 0 q1.25 -1.800 2.5 0 q1.25 -1.800 2.5 0 q1.25 -1.800 2.5 0 V-6.499999999999999z" fill="#dd4b46"/><path d="M172.0 -6.499999999999999 h20 v1 h-20z" fill="#fff"/><path d="M172.0 -5.499999999999999 h20 v3.800 c0 4.500 -8.5 7.400 -10.0 8.400 c-1.500 -1 -10.0 -3.900 -10.0 -8.400z" fill="#3b78cd"/><text x="182" y="2.5999999999999996" text-anchor="middle" font-family="'Liberation Sans',sans-serif" font-size="8.800" font-weight="700" fill="#fff">680</text></g>
<g><path d="M268.5 283.0 V281.0 q1.25 -1.800 2.5 0 q1.25 -1.800 2.5 0 q1.25 -1.800 2.5 0 q1.25 -1.800 2.5 0 q1.25 -1.800 2.5 0 q1.25 -1.800 2.5 0 q1.25 -1.800 2.5 0 q1.25 -1.800 2.5 0 V283.0z" fill="#dd4b46"/><path d="M268.5 283.0 h20 v1 h-20z" fill="#fff"/><path d="M268.5 284.0 h20 v3.800 c0 4.500 -8.5 7.400 -10.0 8.400 c-1.500 -1 -10.0 -3.900 -10.0 -8.400z" fill="#3b78cd"/><text x="278.5" y="292.1" text-anchor="middle" font-family="'Liberation Sans',sans-serif" font-size="8.800" font-weight="700" fill="#fff">680</text></g>
<g><path d="M600.0 98.0 V96.0 q1.25 -1.800 2.5 0 q1.25 -1.800 2.5 0 q1.25 -1.800 2.5 0 q1.25 -1.800 2.5 0 q1.25 -1.800 2.5 0 q1.25 -1.800 2.5 0 q1.25 -1.800 2.5 0 q1.25 -1.800 2.5 0 V98.0z" fill="#dd4b46"/><path d="M600.0 98.0 h20 v1 h-20z" fill="#fff"/><path d="M600.0 99.0 h20 v3.800 c0 4.500 -8.5 7.400 -10.0 8.400 c-1.500 -1 -10.0 -3.900 -10.0 -8.400z" fill="#3b78cd"/><text x="610" y="107.1" text-anchor="middle" font-family="'Liberation Sans',sans-serif" font-size="8.800" font-weight="700" fill="#fff">205</text></g>
<g><path d="M692.0 93.0 V91.0 q0.8125 -1.800 1.625 0 q0.8125 -1.800 1.625 0 q0.8125 -1.800 1.625 0 q0.8125 -1.800 1.625 0 q0.8125 -1.800 1.625 0 q0.8125 -1.800 1.625 0 q0.8125 -1.800 1.625 0 q0.8125 -1.800 1.625 0 V93.0z" fill="#dd4b46"/><path d="M692.0 93.0 h13 v1 h-13z" fill="#fff"/><path d="M692.0 94.0 h13 v3.800 c0 4.500 -5.0 7.400 -6.5 8.400 c-1.500 -1 -6.5 -3.900 -6.5 -8.400z" fill="#3b78cd"/><text x="698.5" y="102.1" text-anchor="middle" font-family="'Liberation Sans',sans-serif" font-size="8.800" font-weight="700" fill="#fff">5</text></g>
<g><path d="M687.0 246.0 V244.0 q0.8125 -1.800 1.625 0 q0.8125 -1.800 1.625 0 q0.8125 -1.800 1.625 0 q0.8125 -1.800 1.625 0 q0.8125 -1.800 1.625 0 q0.8125 -1.800 1.625 0 q0.8125 -1.800 1.625 0 q0.8125 -1.800 1.625 0 V246.0z" fill="#dd4b46"/><path d="M687.0 246.0 h13 v1 h-13z" fill="#fff"/><path d="M687.0 247.0 h13 v3.800 c0 4.500 -5.0 7.400 -6.5 8.400 c-1.500 -1 -6.5 -3.900 -6.5 -8.400z" fill="#3b78cd"/><text x="693.5" y="255.1" text-anchor="middle" font-family="'Liberation Sans',sans-serif" font-size="8.800" font-weight="700" fill="#fff">5</text></g>
<rect x="112.0" y="221.25" width="16" height="13.5" rx="6.500" fill="#fff" stroke="#4a4a4a" stroke-width="1"/><text x="120" y="231.2" text-anchor="middle" font-family="'Liberation Sans',sans-serif" font-size="9" fill="#333">92</text>
<rect x="180.0" y="229.25" width="20" height="13.5" rx="6.500" fill="#fff" stroke="#4a4a4a" stroke-width="1"/><text x="190" y="239.2" text-anchor="middle" font-family="'Liberation Sans',sans-serif" font-size="9" fill="#333">238</text>
<rect x="143.0" y="306.25" width="16" height="13.5" rx="6.500" fill="#fff" stroke="#4a4a4a" stroke-width="1"/><text x="151" y="316.2" text-anchor="middle" font-family="'Liberation Sans',sans-serif" font-size="9" fill="#333">84</text>
<rect x="335.5" y="234.25" width="16" height="13.5" rx="6.500" fill="#fff" stroke="#4a4a4a" stroke-width="1"/><text x="343.5" y="244.2" text-anchor="middle" font-family="'Liberation Sans',sans-serif" font-size="9" fill="#333">84</text>
<rect x="732.0" y="73.25" width="20" height="13.5" rx="6.500" fill="#fff" stroke="#4a4a4a" stroke-width="1"/><text x="742" y="83.2" text-anchor="middle" font-family="'Liberation Sans',sans-serif" font-size="9" fill="#333">120</text>
<rect x="662.5" y="210.25" width="20" height="13.5" rx="6.500" fill="#fff" stroke="#4a4a4a" stroke-width="1"/><text x="672.5" y="220.2" text-anchor="middle" font-family="'Liberation Sans',sans-serif" font-size="9" fill="#333">132</text>
<rect x="704.5" y="192.25" width="16" height="13.5" rx="6.500" fill="#fff" stroke="#4a4a4a" stroke-width="1"/><text x="712.5" y="202.2" text-anchor="middle" font-family="'Liberation Sans',sans-serif" font-size="9" fill="#333">33</text>
<rect x="57.0" y="44.75" width="16" height="13.5" rx="6.500" fill="#fff" stroke="#4a4a4a" stroke-width="1"/><text x="65" y="54.7" text-anchor="middle" font-family="'Liberation Sans',sans-serif" font-size="9" fill="#333">13</text>
<path d="M26 333.5 q3 1.500 5 -0.5 q5 2 10 0 q2 2 5 0.5 q-1.500 4 0 7.500 q0.5 4 -5 5 q-3 0.6 -5 1.500 q-2 -0.9 -5 -1.500 q-5.500 -1 -5 -5 q1.500 -3.500 0 -7.500z" fill="#fff" stroke="#4a4a4a" stroke-width="1"/><text x="36" y="343.4" text-anchor="middle" font-family="'Liberation Sans',sans-serif" font-size="9" fill="#333">101</text>
<text x="-1" y="4.2" text-anchor="start" font-family="'Liberation Sans',sans-serif" font-size="12" font-weight="400" fill="#25282d" stroke="#fff" stroke-width="2.600" stroke-linejoin="round" stroke-opacity=".9" paint-order="stroke">erkeley</text>
<text x="-1" y="33.5" text-anchor="start" font-family="'Liberation Sans',sans-serif" font-size="12" font-weight="400" fill="#25282d" stroke="#fff" stroke-width="2.600" stroke-linejoin="round" stroke-opacity=".9" paint-order="stroke">ry</text>
<text x="-1" y="89.6" text-anchor="start" font-family="'Liberation Sans',sans-serif" font-size="12" font-weight="400" fill="#25282d" stroke="#fff" stroke-width="2.600" stroke-linejoin="round" stroke-opacity=".9" paint-order="stroke">ameda</text>
<text x="-2" y="290" text-anchor="start" font-family="'Liberation Sans',sans-serif" font-size="12" font-weight="400" fill="#25282d" stroke="#fff" stroke-width="2.600" stroke-linejoin="round" stroke-opacity=".9" paint-order="stroke">o</text>
<text x="100" y="139.5" text-anchor="middle" font-family="'Liberation Sans',sans-serif" font-size="12" font-weight="400" fill="#25282d" stroke="#fff" stroke-width="2.600" stroke-linejoin="round" stroke-opacity=".9" paint-order="stroke">San Leandro</text>
<text x="160" y="167.5" text-anchor="middle" font-family="'Liberation Sans',sans-serif" font-size="12" font-weight="400" fill="#25282d" stroke="#fff" stroke-width="2.600" stroke-linejoin="round" stroke-opacity=".9" paint-order="stroke">Castro Valley</text>
<text x="155" y="192.5" text-anchor="middle" font-family="'Liberation Sans',sans-serif" font-size="12" font-weight="400" fill="#25282d" stroke="#fff" stroke-width="2.600" stroke-linejoin="round" stroke-opacity=".9" paint-order="stroke">Hayward</text>
<text x="182" y="261.5" text-anchor="middle" font-family="'Liberation Sans',sans-serif" font-size="12" font-weight="400" fill="#25282d" stroke="#fff" stroke-width="2.600" stroke-linejoin="round" stroke-opacity=".9" paint-order="stroke">Union City</text>
<text x="186" y="319.5" text-anchor="middle" font-family="'Liberation Sans',sans-serif" font-size="12" font-weight="400" fill="#25282d" stroke="#fff" stroke-width="2.600" stroke-linejoin="round" stroke-opacity=".9" paint-order="stroke">Newark</text>
<text x="49" y="361.5" text-anchor="middle" font-family="'Liberation Sans',sans-serif" font-size="12" font-weight="400" fill="#25282d" stroke="#fff" stroke-width="2.600" stroke-linejoin="round" stroke-opacity=".9" paint-order="stroke">Redwood City</text>
<text x="111" y="376.5" text-anchor="middle" font-family="'Liberation Sans',sans-serif" font-size="12" font-weight="400" fill="#25282d" stroke="#fff" stroke-width="2.600" stroke-linejoin="round" stroke-opacity=".9" paint-order="stroke">East Palo Alto</text>
<text x="110" y="400" text-anchor="middle" font-family="'Liberation Sans',sans-serif" font-size="12" font-weight="400" fill="#25282d" stroke="#fff" stroke-width="2.600" stroke-linejoin="round" stroke-opacity=".9" paint-order="stroke">Palo Alto</text>
<text x="206" y="25.5" text-anchor="middle" font-family="'Liberation Sans',sans-serif" font-size="12" font-weight="400" fill="#25282d" stroke="#fff" stroke-width="2.600" stroke-linejoin="round" stroke-opacity=".9" paint-order="stroke">o</text>
<text x="216" y="51.5" text-anchor="middle" font-family="'Liberation Sans',sans-serif" font-size="12" font-weight="400" fill="#25282d" stroke="#fff" stroke-width="2.600" stroke-linejoin="round" stroke-opacity=".9" paint-order="stroke">Danville</text>
<text x="282" y="54.5" text-anchor="middle" font-family="'Liberation Sans',sans-serif" font-size="12" font-weight="400" fill="#25282d" stroke="#fff" stroke-width="2.600" stroke-linejoin="round" stroke-opacity=".9" paint-order="stroke">Blackhawk</text>
<text x="247" y="104.5" text-anchor="middle" font-family="'Liberation Sans',sans-serif" font-size="12" font-weight="400" fill="#25282d" stroke="#fff" stroke-width="2.600" stroke-linejoin="round" stroke-opacity=".9" paint-order="stroke">San Ramon</text>
<text x="280" y="148.5" text-anchor="middle" font-family="'Liberation Sans',sans-serif" font-size="12" font-weight="400" fill="#25282d" stroke="#fff" stroke-width="2.600" stroke-linejoin="round" stroke-opacity=".9" paint-order="stroke">Dublin</text>
<text x="305" y="200.5" text-anchor="middle" font-family="'Liberation Sans',sans-serif" font-size="12" font-weight="400" fill="#25282d" stroke="#fff" stroke-width="2.600" stroke-linejoin="round" stroke-opacity=".9" paint-order="stroke">Pleasanton</text>
<text x="382.5" y="179.8" text-anchor="middle" font-family="'Liberation Sans',sans-serif" font-size="12" font-weight="400" fill="#25282d" stroke="#fff" stroke-width="2.600" stroke-linejoin="round" stroke-opacity=".9" paint-order="stroke">Livermore</text>
<text x="422" y="160.5" text-anchor="middle" font-family="'Liberation Sans',sans-serif" font-size="12" font-weight="400" fill="#25282d" stroke="#fff" stroke-width="2.600" stroke-linejoin="round" stroke-opacity=".9" paint-order="stroke">Ulmar</text>
<text x="459" y="123.5" text-anchor="middle" font-family="'Liberation Sans',sans-serif" font-size="12" font-weight="400" fill="#25282d" stroke="#fff" stroke-width="2.600" stroke-linejoin="round" stroke-opacity=".9" paint-order="stroke">Altamont</text>
<text x="478" y="9.5" text-anchor="middle" font-family="'Liberation Sans',sans-serif" font-size="12" font-weight="400" fill="#25282d" stroke="#fff" stroke-width="2.600" stroke-linejoin="round" stroke-opacity=".9" paint-order="stroke">Byron</text>
<text x="547" y="84.5" text-anchor="middle" font-family="'Liberation Sans',sans-serif" font-size="12" font-weight="400" fill="#25282d" stroke="#fff" stroke-width="2.600" stroke-linejoin="round" stroke-opacity=".9" paint-order="stroke">Mountain</text>
<text x="547" y="96.5" text-anchor="middle" font-family="'Liberation Sans',sans-serif" font-size="12" font-weight="400" fill="#25282d" stroke="#fff" stroke-width="2.600" stroke-linejoin="round" stroke-opacity=".9" paint-order="stroke">House</text>
<text x="632" y="127.5" text-anchor="middle" font-family="'Liberation Sans',sans-serif" font-size="12" font-weight="400" fill="#25282d" stroke="#fff" stroke-width="2.600" stroke-linejoin="round" stroke-opacity=".9" paint-order="stroke">Tracy</text>
<text x="673" y="113.5" text-anchor="middle" font-family="'Liberation Sans',sans-serif" font-size="12" font-weight="400" fill="#25282d" stroke="#fff" stroke-width="2.600" stroke-linejoin="round" stroke-opacity=".9" paint-order="stroke">Banta</text>
<text x="665" y="148.5" text-anchor="middle" font-family="'Liberation Sans',sans-serif" font-size="12" font-weight="400" fill="#25282d" stroke="#fff" stroke-width="2.600" stroke-linejoin="round" stroke-opacity=".9" paint-order="stroke">Lyoth</text>
<text x="642" y="168.5" text-anchor="middle" font-family="'Liberation Sans',sans-serif" font-size="12" font-weight="400" fill="#25282d" stroke="#fff" stroke-width="2.600" stroke-linejoin="round" stroke-opacity=".9" paint-order="stroke">Carbona</text>
<text x="690" y="185.5" text-anchor="start" font-family="'Liberation Sans',sans-serif" font-size="12" font-weight="400" fill="#25282d" stroke="#fff" stroke-width="2.600" stroke-linejoin="round" stroke-opacity=".9" paint-order="stroke">New Jerusalem</text>
<text x="712" y="226.8" text-anchor="start" font-family="'Liberation Sans',sans-serif" font-size="12" font-weight="400" fill="#25282d" stroke="#fff" stroke-width="2.600" stroke-linejoin="round" stroke-opacity=".9" paint-order="stroke">Vernalis</text>
<text x="762" y="50.5" text-anchor="end" font-family="'Liberation Sans',sans-serif" font-size="12" font-weight="400" fill="#25282d" stroke="#fff" stroke-width="2.600" stroke-linejoin="round" stroke-opacity=".9" paint-order="stroke">Lathrop</text>
<text x="296" y="261.5" text-anchor="middle" font-family="'Liberation Sans',sans-serif" font-size="12" font-weight="400" fill="#25282d" stroke="#fff" stroke-width="2.600" stroke-linejoin="round" stroke-opacity=".9" paint-order="stroke">Sunol</text>
<text x="472" y="260.5" text-anchor="middle" font-family="'Liberation Sans',sans-serif" font-size="12" font-weight="400" fill="#25282d" stroke="#fff" stroke-width="2.600" stroke-linejoin="round" stroke-opacity=".9" paint-order="stroke">Mendenhall</text>
<text x="472" y="272.5" text-anchor="middle" font-family="'Liberation Sans',sans-serif" font-size="12" font-weight="400" fill="#25282d" stroke="#fff" stroke-width="2.600" stroke-linejoin="round" stroke-opacity=".9" paint-order="stroke">Springs</text>
<text x="-2" y="68" text-anchor="start" font-family="'Liberation Sans',sans-serif" font-size="13.8" font-weight="700" fill="#25282d" stroke="#fff" stroke-width="2.600" stroke-linejoin="round" stroke-opacity=".9" paint-order="stroke">akland</text>
<text x="222" y="303" text-anchor="middle" font-family="'Liberation Sans',sans-serif" font-size="13.7" font-weight="700" fill="#25282d" stroke="#fff" stroke-width="2.600" stroke-linejoin="round" stroke-opacity=".9" paint-order="stroke">Fremont</text>
<text x="54" y="319.5" text-anchor="middle" font-family="'Liberation Sans',sans-serif" font-size="12" font-weight="400" font-style="italic" fill="#25282d" stroke="#fff" stroke-width="2.600" stroke-linejoin="round" stroke-opacity=".9" paint-order="stroke">Bair Island</text>
<g transform="translate(0,1)"><path d="M380 199 C378 190 366.500 185 366.500 176 a13.500 13.500 0 0 1 27 0 C393.500 185 382 190 380 199z" fill="#ea4335" stroke="#c5221f" stroke-width=".6"/><circle cx="380" cy="175.600" r="4.900" fill="#b31412"/></g>
</svg>
<div class="gm-type"><div class="gm-m">Map</div><div class="gm-s">Satellite</div></div>
<div class="gm-box" style="left:710px;top:10px;height:40px"><svg viewBox="0 0 40 40" width="40" height="40"><path d="M11.500 17.500V11.500H17.500M22.500 11.500H28.500V17.500M28.500 22.500V28.500H22.500M17.500 28.500H11.500V22.500" fill="none" stroke="#4e4e4e" stroke-width="2.200"/></svg></div>
<div class="gm-box" style="left:710px;top:224px;height:39px"><svg viewBox="0 0 40 39" width="40" height="39"><circle cx="19.400" cy="9.700" r="5.200" fill="#fdbf2d" stroke="#6b5a2a" stroke-width=".5"/><path d="M13.900 14.600H24.600L27.300 24.600 25.800 25.400 23.900 21 23.700 34H19.900L19.600 26.500H18.900L18.600 34H14.900L14.700 21 12.700 25.400 11.200 24.600Z" fill="#fdbf2d" stroke="#6b5a2a" stroke-width=".5" stroke-linejoin="round"/><path d="M16.200 14.800H22.400L19.300 20.300Z" fill="#e8851f"/></svg></div>
<div class="gm-box" style="left:710px;top:295px;height:81px"><svg viewBox="0 0 40 81" width="40" height="81"><path d="M11 20h18M20 11v18M11 61h18" stroke="#666" stroke-width="3.600" fill="none"/><path d="M5 40.500h30" stroke="#e6e6e6" stroke-width="1"/></svg></div>
<div class="gm-attr"><span style="left:6px">Keyboard shortcuts</span><span style="left:105px">Map data ©2024 Google</span><span style="left:226px">Terms</span></div>
<div class="gm-logo"><span style="color:#4285f4">G</span><span style="color:#ea4335">o</span><span style="color:#fbbc05">o</span><span style="color:#4285f4">g</span><span style="color:#34a853">l</span><span style="color:#ea4335">e</span></div>
<!--/MAP-->
</div>
  <div class="ft">
    <div class="btn" id="edit">Edit</div>
    <div class="btn" id="delete">Delete</div>
  </div>
</div>
<div id="footer"></div>
</body>
</html>
